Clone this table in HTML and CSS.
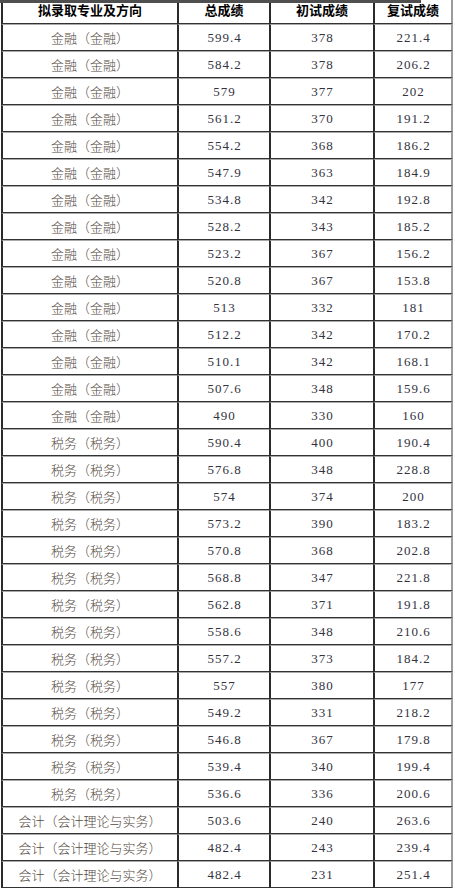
FILE: index.html
```html
<!DOCTYPE html>
<html lang="zh">
<head>
<meta charset="utf-8">
<title>拟录取名单</title>
<link rel="stylesheet" href="styles.css">
</head>
<body>
<div class="page">
  <div class="topbar"></div>
  <table class="score-table">
    <colgroup>
      <col class="c1"><col class="c2"><col class="c3"><col class="c4">
    </colgroup>
    <thead>
      <tr><th>拟录取专业及方向</th><th>总成绩</th><th>初试成绩</th><th class="last">复试成绩</th></tr>
    </thead>
    <tbody>
      <tr><td class="major">金融（金融）</td><td class="num">599.4</td><td class="num">378</td><td class="num last">221.4</td></tr>
      <tr><td class="major">金融（金融）</td><td class="num">584.2</td><td class="num">378</td><td class="num last">206.2</td></tr>
      <tr><td class="major">金融（金融）</td><td class="num">579</td><td class="num">377</td><td class="num last">202</td></tr>
      <tr><td class="major">金融（金融）</td><td class="num">561.2</td><td class="num">370</td><td class="num last">191.2</td></tr>
      <tr><td class="major">金融（金融）</td><td class="num">554.2</td><td class="num">368</td><td class="num last">186.2</td></tr>
      <tr><td class="major">金融（金融）</td><td class="num">547.9</td><td class="num">363</td><td class="num last">184.9</td></tr>
      <tr><td class="major">金融（金融）</td><td class="num">534.8</td><td class="num">342</td><td class="num last">192.8</td></tr>
      <tr><td class="major">金融（金融）</td><td class="num">528.2</td><td class="num">343</td><td class="num last">185.2</td></tr>
      <tr><td class="major">金融（金融）</td><td class="num">523.2</td><td class="num">367</td><td class="num last">156.2</td></tr>
      <tr><td class="major">金融（金融）</td><td class="num">520.8</td><td class="num">367</td><td class="num last">153.8</td></tr>
      <tr><td class="major">金融（金融）</td><td class="num">513</td><td class="num">332</td><td class="num last">181</td></tr>
      <tr><td class="major">金融（金融）</td><td class="num">512.2</td><td class="num">342</td><td class="num last">170.2</td></tr>
      <tr><td class="major">金融（金融）</td><td class="num">510.1</td><td class="num">342</td><td class="num last">168.1</td></tr>
      <tr><td class="major">金融（金融）</td><td class="num">507.6</td><td class="num">348</td><td class="num last">159.6</td></tr>
      <tr><td class="major">金融（金融）</td><td class="num">490</td><td class="num">330</td><td class="num last">160</td></tr>
      <tr><td class="major">税务（税务）</td><td class="num">590.4</td><td class="num">400</td><td class="num last">190.4</td></tr>
      <tr><td class="major">税务（税务）</td><td class="num">576.8</td><td class="num">348</td><td class="num last">228.8</td></tr>
      <tr><td class="major">税务（税务）</td><td class="num">574</td><td class="num">374</td><td class="num last">200</td></tr>
      <tr><td class="major">税务（税务）</td><td class="num">573.2</td><td class="num">390</td><td class="num last">183.2</td></tr>
      <tr><td class="major">税务（税务）</td><td class="num">570.8</td><td class="num">368</td><td class="num last">202.8</td></tr>
      <tr><td class="major">税务（税务）</td><td class="num">568.8</td><td class="num">347</td><td class="num last">221.8</td></tr>
      <tr><td class="major">税务（税务）</td><td class="num">562.8</td><td class="num">371</td><td class="num last">191.8</td></tr>
      <tr><td class="major">税务（税务）</td><td class="num">558.6</td><td class="num">348</td><td class="num last">210.6</td></tr>
      <tr><td class="major">税务（税务）</td><td class="num">557.2</td><td class="num">373</td><td class="num last">184.2</td></tr>
      <tr><td class="major">税务（税务）</td><td class="num">557</td><td class="num">380</td><td class="num last">177</td></tr>
      <tr><td class="major">税务（税务）</td><td class="num">549.2</td><td class="num">331</td><td class="num last">218.2</td></tr>
      <tr><td class="major">税务（税务）</td><td class="num">546.8</td><td class="num">367</td><td class="num last">179.8</td></tr>
      <tr><td class="major">税务（税务）</td><td class="num">539.4</td><td class="num">340</td><td class="num last">199.4</td></tr>
      <tr><td class="major">税务（税务）</td><td class="num">536.6</td><td class="num">336</td><td class="num last">200.6</td></tr>
      <tr><td class="major">会计（会计理论与实务）</td><td class="num">503.6</td><td class="num">240</td><td class="num last">263.6</td></tr>
      <tr><td class="major">会计（会计理论与实务）</td><td class="num">482.4</td><td class="num">243</td><td class="num last">239.4</td></tr>
      <tr><td class="major">会计（会计理论与实务）</td><td class="num">482.4</td><td class="num">231</td><td class="num last">251.4</td></tr>
    </tbody>
  </table>
</div>
</body>
</html>
```
FILE: styles.css
```css
html, body {
  margin: 0;
  padding: 0;
  background: #ffffff;
}

body {
  font-family: "Noto Sans CJK SC", "Noto Sans", sans-serif;
}

.page {
  position: relative;
  padding-left: 1px;
}

.topbar {
  position: absolute;
  left: 0;
  top: 0;
  width: 421px;
  height: 3px;
  background: #4f4f4f;
}

.score-table {
  border-collapse: separate;
  border-spacing: 0;
  table-layout: fixed;
  width: 452px;
}

.c1 { width: 176px; }
.c2 { width: 92px; }
.c3 { width: 104px; }
.c4 { width: 80px; }

.score-table th,
.score-table td {
  box-sizing: border-box;
  padding: 0;
  text-align: center;
  vertical-align: middle;
  border-left: 2px solid #2a2a2a;
  white-space: nowrap;
}

.score-table .last {
  border-right: 2px solid #9c9c9c;
}

.score-table th {
  height: 24px;
  padding-bottom: 3px;
  border-bottom: 1px solid #333333;
  font-size: 13px;
  font-weight: 700;
  color: #000000;
  line-height: 16px;
}

.score-table td {
  height: 27px;
  border-top: 1px solid #a9a9a9;
  border-bottom: 1px solid #333333;
  line-height: 16px;
}

.major {
  font-size: 13px;
  font-weight: 300;
  color: #54493e;
  padding-top: 2px;
}

.num {
  font-family: "Liberation Serif", "Times New Roman", serif;
  font-size: 13px;
  letter-spacing: 1px;
  text-indent: 1px;
  color: #333340;
}
```
